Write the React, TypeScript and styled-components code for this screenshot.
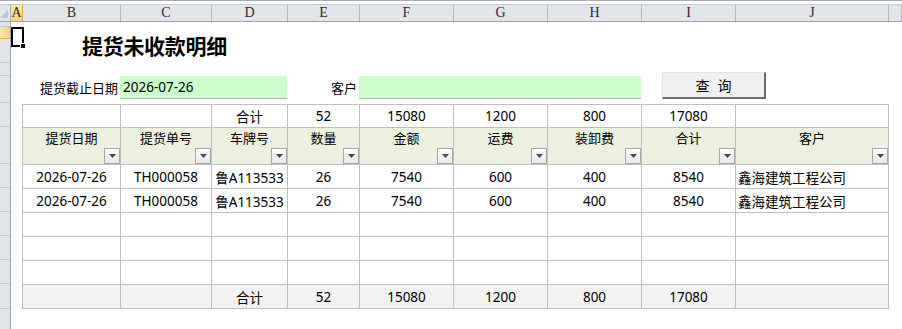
import React from 'react';
import styled, { createGlobalStyle } from 'styled-components';

const Global = createGlobalStyle`
  html, body { margin: 0; padding: 0; background: #fff; }
  body {
    width: 902px; height: 329px; overflow: hidden;
    font-family: "Noto Sans", "Noto Sans CJK SC", sans-serif;
    color: #000;
  }
`;

const Sheet = styled.div`
  width: 902px;
  height: 329px;
  display: flex;
  flex-direction: column;
  overflow: hidden;
`;

const TopStrip = styled.div`
  height: 4px;
  flex: none;
  box-sizing: border-box;
  border-top: 1px solid #a9adb3;
  background: #fff;
`;

const ColHeaderRow = styled.div`
  display: flex;
  flex: none;
  height: 18px;
  box-sizing: border-box;
  border-top: 1px solid #c8ccd2;
  border-bottom: 1px solid #9ea4ab;
  background: #e2e6eb;
`;

const Corner = styled.div`
  width: 11px;
  flex: none;
  box-sizing: border-box;
  border-right: 1px solid #aab1ba;
  display: flex;
  align-items: flex-end;
  justify-content: flex-start;
  padding: 0 0 3px 0;
`;

const ColHeader = styled.div<{ $w?: number; $sel?: boolean }>`
  ${(p) => (p.$w ? `width: ${p.$w}px; flex: none;` : 'flex: 1;')}
  box-sizing: border-box;
  border-right: 1px solid ${(p) => (p.$sel ? '#e6a83c' : '#b3bac3')};
  background: ${(p) => (p.$sel ? 'linear-gradient(#fde7a8, #f8d17c)' : 'transparent')};
  display: flex;
  align-items: center;
  justify-content: center;
  font-family: "Liberation Serif", "DejaVu Serif", serif;
  font-size: 14px;
  color: #2b2b2b;
  line-height: 1;
  overflow: hidden;
`;

const Body = styled.div`
  flex: 1;
  min-height: 0;
  display: flex;
  overflow: hidden;
`;

const RowHeaderCol = styled.div`
  width: 11px;
  flex: none;
  display: flex;
  flex-direction: column;
  background: #e2e6eb;
  box-sizing: border-box;
  border-right: 1px solid #9ea4ab;
  overflow: hidden;
`;

const RowHeader = styled.div<{ $h: number; $sel?: boolean }>`
  height: ${(p) => p.$h}px;
  flex: none;
  box-sizing: border-box;
  border-bottom: 1px solid ${(p) => (p.$sel ? '#e6a83c' : '#c3c9d0')};
  background: ${(p) => (p.$sel ? 'linear-gradient(90deg, #fde7a8, #f8d17c)' : 'transparent')};
`;

const Content = styled.div`
  flex: 1;
  position: relative;
  display: flex;
  flex-direction: column;
`;

const Selection = styled.div`
  position: absolute;
  left: 0;
  top: 5px;
  width: 13px;
  height: 20px;
  box-sizing: border-box;
  border: 2px solid #000;
  &::after {
    content: '';
    position: absolute;
    right: -4px;
    bottom: -4px;
    width: 6px;
    height: 6px;
    background: #000;
    border: 1px solid #fff;
    box-sizing: border-box;
  }
`;

const TitleBlock = styled.div`
  height: 54px;
  flex: none;
  box-sizing: border-box;
  padding: 12px 0 0 71px;
`;

const Title = styled.h1`
  margin: 0;
  font-family: "Noto Sans CJK SC", sans-serif;
  font-weight: 700;
  font-size: 21px;
  line-height: 22px;
  letter-spacing: -0.3px;
`;

const FilterRow = styled.div`
  display: flex;
  flex: none;
  align-items: flex-start;
  height: 23px;
`;

const Label = styled.div<{ $w: number }>`
  width: ${(p) => p.$w}px;
  flex: none;
  height: 22px;
  box-sizing: border-box;
  padding-right: 2px;
  display: flex;
  align-items: center;
  justify-content: flex-end;
  font-size: 13px;
`;

const InputBox = styled.div<{ $w: number }>`
  width: ${(p) => p.$w}px;
  flex: none;
  height: 23px;
  box-sizing: border-box;
  background: #ccffcc;
  border-bottom: 1px solid #b4b4b4;
  display: flex;
  align-items: center;
  padding-left: 3px;
  font-size: 13.5px;
`;

const QueryButton = styled.button`
  margin: -4px 0 0 21px;
  width: 104px;
  height: 27px;
  box-sizing: border-box;
  background: #f0f0f0;
  border: none;
  border-top: 1px solid #e3e3e3;
  border-left: 1px solid #e3e3e3;
  border-right: 2px solid #6d6d6d;
  border-bottom: 2px solid #6d6d6d;
  font-family: "Noto Sans CJK SC", sans-serif;
  font-size: 14px;
  word-spacing: 5px;
  padding: 0;
  color: #000;
`;

const Table = styled.div`
  margin: 5px 0 0 11px;
  flex: none;
  display: grid;
  grid-template-columns: 98px 91px 76px 72px 94px 94px 94px 94px 153px;
  width: 867px;
  box-sizing: border-box;
  border-left: 1px solid #c0c0c0;
  border-top: 1px solid #c0c0c0;
`;

type Kind = 'plain' | 'head' | 'total';

const Cell = styled.div<{ $h: number; $kind: Kind; $left?: boolean }>`
  height: ${(p) => p.$h}px;
  box-sizing: border-box;
  border-right: 1px solid #c0c0c0;
  border-bottom: 1px solid #c0c0c0;
  background: ${(p) => (p.$kind === 'head' ? '#ebf1de' : p.$kind === 'total' ? '#f2f2f2' : '#fff')};
  display: flex;
  align-items: center;
  justify-content: ${(p) => (p.$left ? 'flex-start' : 'center')};
  padding-left: ${(p) => (p.$left ? '2px' : '0')};
  font-size: 13.5px;
  white-space: nowrap;
  overflow: hidden;
`;

const HeadCell = styled.div`
  height: 37px;
  box-sizing: border-box;
  border-right: 1px solid #c0c0c0;
  border-bottom: 1px solid #c0c0c0;
  background: #ebf1de;
  display: flex;
  flex-direction: column;
  align-items: center;
  font-size: 13px;
`;

const HeadText = styled.div`
  line-height: 18px;
  padding-top: 1px;
`;

const FilterBtn = styled.div`
  margin-top: auto;
  align-self: flex-end;
  width: 16px;
  height: 16px;
  box-sizing: border-box;
  border: 1px solid #a8a8a8;
  background: linear-gradient(#fdfdfd, #e9e9e9);
  display: flex;
  align-items: center;
  justify-content: center;
`;

const cols = [
  { l: 'A', w: 12, sel: true },
  { l: 'B', w: 98 },
  { l: 'C', w: 91 },
  { l: 'D', w: 76 },
  { l: 'E', w: 72 },
  { l: 'F', w: 94 },
  { l: 'G', w: 94 },
  { l: 'H', w: 94 },
  { l: 'I', w: 94 },
  { l: 'J', w: 153 },
  { l: '' },
];

const rowHeights = [5, 12, 24, 13, 27, 24, 37, 24, 24, 24, 24, 24, 25, 30];

const totals = ['', '', '合计', '52', '15080', '1200', '800', '17080', ''];
const heads = ['提货日期', '提货单号', '车牌号', '数量', '金额', '运费', '装卸费', '合计', '客户'];
const dataRow = ['2026-07-26', 'TH000058', '鲁A113533', '26', '7540', '600', '400', '8540', '鑫海建筑工程公司'];
const empty = ['', '', '', '', '', '', '', '', ''];

const Arrow = () => (
  <svg width="7" height="4" viewBox="0 0 7 4">
    <path d="M0 0 L7 0 L3.5 4 Z" fill="#4a4a4a" />
  </svg>
);

const CornerMark = () => (
  <svg width="8" height="8" viewBox="0 0 8 8">
    <path d="M8 0 L8 8 L0 8 Z" fill="#c2c6cc" />
  </svg>
);

const renderRow = (vals: string[], kind: Kind, key: string) =>
  vals.map((v, i) => (
    <Cell key={key + i} $h={24} $kind={kind} $left={i === 8 && v !== ''}>
      {v}
    </Cell>
  ));

export default function App() {
  return (
    <>
      <Global />
      <Sheet>
        <TopStrip />
        <ColHeaderRow>
          <Corner>
            <CornerMark />
          </Corner>
          {cols.map((c, i) => (
            <ColHeader key={i} $w={c.w} $sel={c.sel}>
              {c.l}
            </ColHeader>
          ))}
        </ColHeaderRow>
        <Body>
          <RowHeaderCol>
            {rowHeights.map((h, i) => (
              <RowHeader key={i} $h={h} $sel={i === 1} />
            ))}
          </RowHeaderCol>
          <Content>
            <Selection />
            <TitleBlock>
              <Title>提货未收款明细</Title>
            </TitleBlock>
            <FilterRow>
              <Label $w={109}>提货截止日期</Label>
              <InputBox $w={167}>2026-07-26</InputBox>
              <Label $w={72}>客户</Label>
              <InputBox $w={282} />
              <QueryButton>查 询</QueryButton>
            </FilterRow>
            <Table>
              {totals.map((v, i) => (
                <Cell key={'t' + i} $h={23} $kind="plain">
                  {v}
                </Cell>
              ))}
              {heads.map((h) => (
                <HeadCell key={h}>
                  <HeadText>{h}</HeadText>
                  <FilterBtn>
                    <Arrow />
                  </FilterBtn>
                </HeadCell>
              ))}
              {renderRow(dataRow, 'plain', 'd1')}
              {renderRow(dataRow, 'plain', 'd2')}
              {renderRow(empty, 'plain', 'e1')}
              {renderRow(empty, 'plain', 'e2')}
              {renderRow(empty, 'plain', 'e3')}
              {renderRow(totals, 'total', 'b')}
            </Table>
          </Content>
        </Body>
      </Sheet>
    </>
  );
}
